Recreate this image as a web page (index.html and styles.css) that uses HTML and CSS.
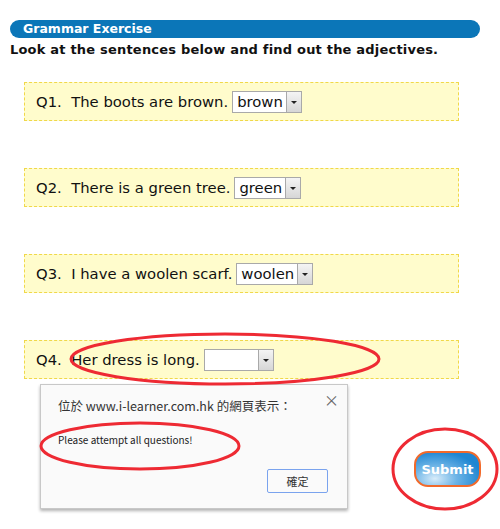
FILE: index.html
```html
<!DOCTYPE html>
<html lang="en">
<head>
  <meta charset="UTF-8">
  <title>Grammar Exercise</title>
  <link rel="stylesheet" href="styles.css">
</head>
<body>
  <div class="page">
    <div class="title-bar">Grammar Exercise</div>
    <p class="instruction">Look at the sentences below and find out the adjectives.</p>

    <form id="quiz" class="quiz">
      <div class="question">
        <span class="qtext">Q1.  The boots are brown.</span>
        <span class="fake-select"><span class="val">brown</span><span class="arrow"></span></span>
      </div>
      <div class="question">
        <span class="qtext">Q2.  There is a green tree.</span>
        <span class="fake-select"><span class="val">green</span><span class="arrow"></span></span>
      </div>
      <div class="question">
        <span class="qtext">Q3.  I have a woolen scarf.</span>
        <span class="fake-select"><span class="val">woolen</span><span class="arrow"></span></span>
      </div>
      <div class="question">
        <span class="qtext">Q4.  Her dress is long.</span>
        <span class="fake-select empty"><span class="val"></span><span class="arrow"></span></span>
      </div>

      <div class="actions">
        <button type="button" class="submit">Submit</button>
      </div>
    </form>

    <div class="dialog">
      <div class="dialog-title">位於 www.i-learner.com.hk 的網頁表示：</div>
      <span class="dialog-close">&#215;</span>
      <div class="dialog-msg">Please attempt all questions!</div>
      <div class="dialog-foot">
        <button type="button" class="ok">確定</button>
      </div>
    </div>

    <svg class="marks" width="500" height="529" viewBox="0 0 500 529">
      <ellipse cx="225" cy="359" rx="154" ry="25" />
      <ellipse cx="140" cy="446" rx="99" ry="23" />
      <ellipse cx="445" cy="469" rx="52" ry="40" />
    </svg>
  </div>
</body>
</html>
```

FILE: styles.css
```css
body {
  margin: 0;
  font-family: "DejaVu Sans", sans-serif;
  background: #fff;
}

.page {
  position: relative;
  width: 500px;
  height: 529px;
  overflow: hidden;
  padding-top: 20px;
  box-sizing: border-box;
}

.title-bar {
  margin-left: 10px;
  width: 470px;
  height: 18px;
  line-height: 18px;
  background: #0b76b8;
  border-radius: 9px;
  color: #fff;
  font-weight: bold;
  font-size: 12.5px;
  padding-left: 13px;
  box-sizing: border-box;
}

.instruction {
  margin: 4px 0 0 10px;
  font-size: 13px;
  font-weight: bold;
  color: #111;
  letter-spacing: 0.2px;
}

.quiz {
  display: flex;
  flex-direction: column;
  gap: 47px;
  margin: 25px 0 0 24px;
}

.question {
  width: 435px;
  height: 39px;
  box-sizing: border-box;
  border: 1px dashed #f0d84a;
  background: #fffccc;
  display: flex;
  align-items: center;
  padding-left: 11px;
  font-size: 14.8px;
  color: #111;
}

.qtext {
  white-space: pre;
}

.fake-select {
  display: inline-flex;
  align-items: stretch;
  height: 22px;
  box-sizing: border-box;
  border: 1px solid #a9a9a9;
  background: #fff;
  margin-left: 4px;
}

.fake-select .val {
  padding: 0 3px 0 4px;
  line-height: 20px;
  font-size: 14.8px;
}

.fake-select.empty .val {
  width: 46px;
}

.fake-select .arrow {
  width: 14px;
  border-left: 1px solid #a9a9a9;
  background: linear-gradient(#f4f4f4, #d6d6d6);
  position: relative;
}

.fake-select .arrow::after {
  content: "";
  position: absolute;
  left: 4px;
  top: 9px;
  border-left: 3px solid transparent;
  border-right: 3px solid transparent;
  border-top: 3px solid #222;
}

.actions {
  display: flex;
  justify-content: flex-end;
  padding-right: 19px;
  margin-top: 25px;
}

.submit {
  width: 67px;
  height: 36px;
  border: 2px solid #f26a2b;
  border-radius: 14px;
  background: radial-gradient(ellipse at 30% 80%, #d8ecfa 0%, #6db4e6 35%, #1f86d2 75%);
  color: #fff;
  font-family: "DejaVu Sans", sans-serif;
  font-weight: bold;
  font-size: 13px;
  padding: 0;
}

.dialog {
  position: absolute;
  left: 40px;
  top: 384px;
  width: 308px;
  height: 125px;
  box-sizing: border-box;
  background: #fafafa;
  border: 1px solid #c8c8c8;
  box-shadow: 0 2px 3px rgba(0, 0, 0, 0.3);
  font-family: "Noto Sans CJK TC", "DejaVu Sans", sans-serif;
  color: #333;
}

.dialog-title {
  margin: 11px 0 0 17px;
  font-size: 12.5px;
}

.dialog-close {
  position: absolute;
  right: 8px;
  top: 4px;
  font-size: 15px;
  color: #666;
}

.dialog-msg {
  margin: 17px 0 0 17px;
  font-size: 10px;
  color: #222;
}

.dialog-foot {
  display: flex;
  justify-content: flex-end;
  margin: 22px 19px 0 0;
}

.ok {
  width: 61px;
  height: 24px;
  border: 1px solid #7aa3ee;
  border-radius: 2px;
  background: #fafafa;
  font-family: "Noto Sans CJK TC", sans-serif;
  font-size: 11px;
  color: #333;
  padding: 0;
}

.marks {
  position: absolute;
  left: 0;
  top: 0;
  pointer-events: none;
}

.marks ellipse {
  fill: none;
  stroke: #ee2a33;
  stroke-width: 3;
}
```
